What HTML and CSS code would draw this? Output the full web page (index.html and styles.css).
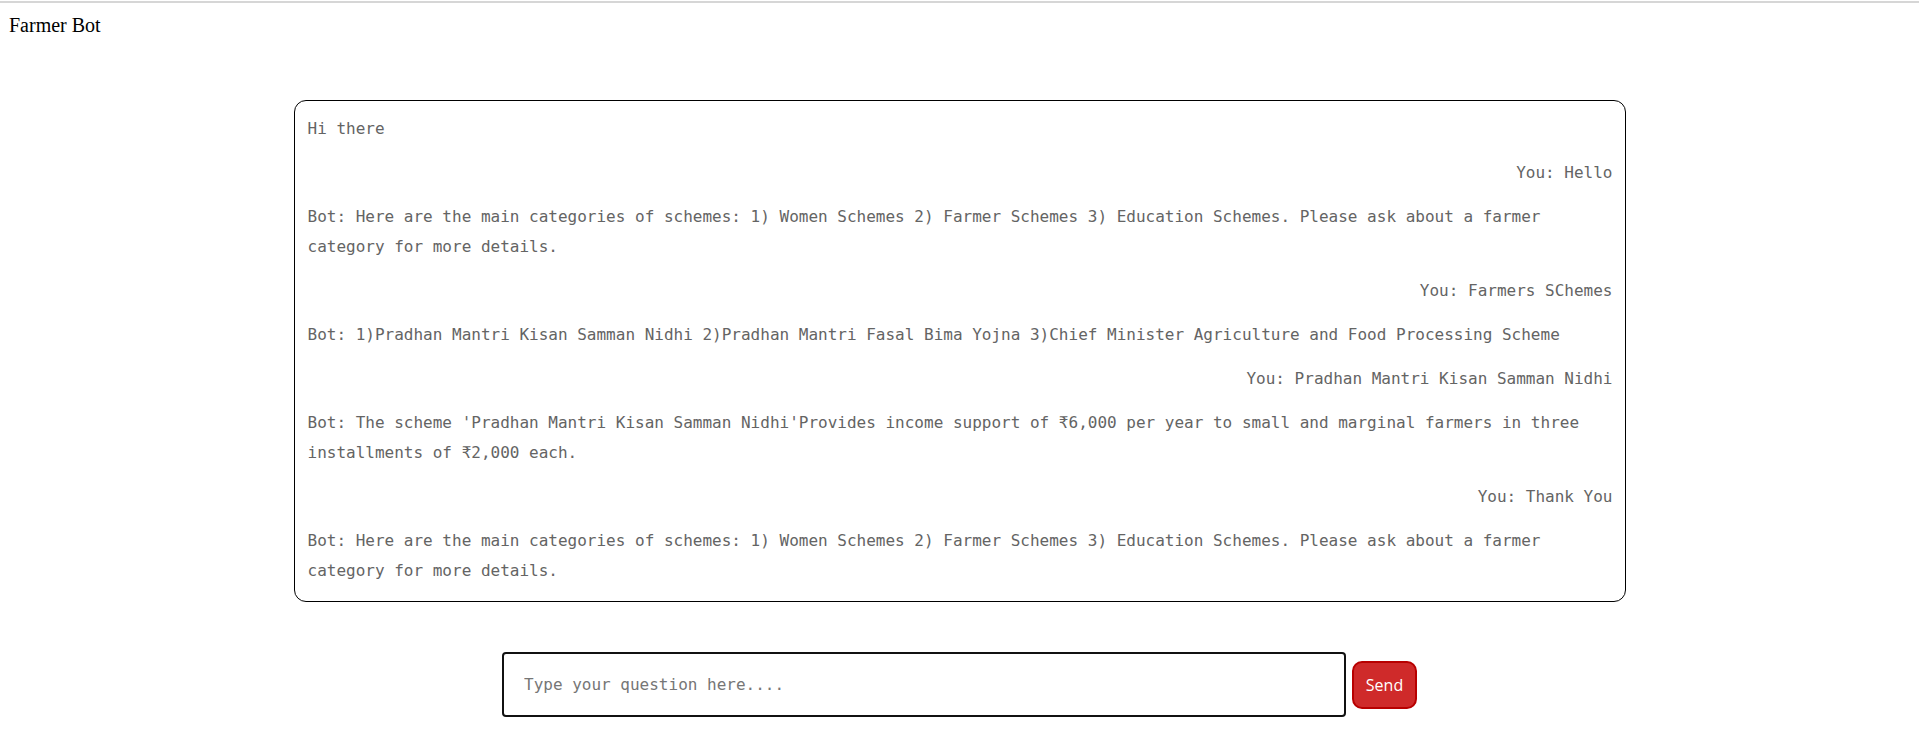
FILE: index.html
```html
<!DOCTYPE html>
<html lang="en">
<head>
<meta charset="utf-8">
<title>Farmer Bot</title>
<link rel="stylesheet" href="styles.css">
</head>
<body>
<div class="topline"></div>
<header class="title">Farmer Bot</header>
<main class="chat">
  <div class="msg bot">Hi there</div>
  <div class="msg user">You: Hello</div>
  <div class="msg bot">Bot: Here are the main categories of schemes: 1) Women Schemes 2) Farmer Schemes 3) Education Schemes. Please ask about a farmer category for more details.</div>
  <div class="msg user">You: Farmers SChemes</div>
  <div class="msg bot">Bot: 1)Pradhan Mantri Kisan Samman Nidhi 2)Pradhan Mantri Fasal Bima Yojna 3)Chief Minister Agriculture and Food Processing Scheme</div>
  <div class="msg user">You: Pradhan Mantri Kisan Samman Nidhi</div>
  <div class="msg bot">Bot: The scheme 'Pradhan Mantri Kisan Samman Nidhi'Provides income support of ₹6,000 per year to small and marginal farmers in three installments of ₹2,000 each.</div>
  <div class="msg user">You: Thank You</div>
  <div class="msg bot">Bot: Here are the main categories of schemes: 1) Women Schemes 2) Farmer Schemes 3) Education Schemes. Please ask about a farmer category for more details.</div>
</main>
<form class="composer">
  <input class="question" type="text" placeholder="Type your question here....">
  <button class="send" type="button">Send</button>
</form>
</body>
</html>
```

FILE: styles.css
```css
html, body {
  margin: 0;
  padding: 0;
  background: #ffffff;
}

.topline {
  margin-top: 1px;
  height: 2px;
  background: #d6d6d6;
}

.title {
  margin: 11px 0 0 9px;
  font-family: "Liberation Serif", "Times New Roman", serif;
  font-size: 20px;
  line-height: 23px;
  color: #000;
}

.chat {
  box-sizing: border-box;
  width: 1332px;
  margin: 63px auto 0;
  border: 1px solid #000;
  border-radius: 12px;
  padding: 13px 12px 15px 13px;
  display: flex;
  flex-direction: column;
  gap: 14px;
  font-family: "DejaVu Sans Mono", "Liberation Mono", monospace;
  font-size: 16px;
  line-height: 30px;
  color: #646464;
}

.msg.user {
  text-align: right;
}

.composer {
  display: flex;
  justify-content: center;
  align-items: center;
  gap: 6px;
  margin: 50px 0 0;
}

.question {
  box-sizing: border-box;
  width: 844px;
  height: 65px;
  border: 2px solid #111;
  border-radius: 4px;
  padding: 0 20px;
  font-family: "DejaVu Sans Mono", "Liberation Mono", monospace;
  font-size: 16px;
  color: #333;
  outline: none;
}

.question::placeholder {
  color: #767676;
}

.send {
  box-sizing: border-box;
  width: 65px;
  height: 48px;
  background: #cf2a2a;
  border: 2px solid #b80000;
  border-radius: 10px;
  color: #fff;
  font-family: "Open Sans", "Noto Sans", sans-serif;
  font-size: 16px;
  padding: 0;
}
```
